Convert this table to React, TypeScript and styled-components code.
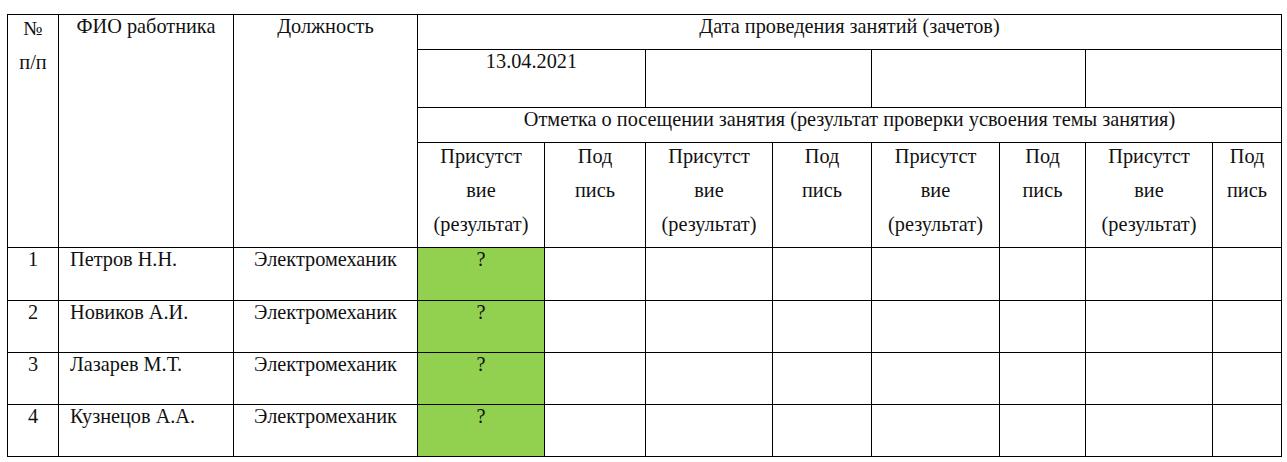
import React from "react";
import styled, { createGlobalStyle } from "styled-components";

const Global = createGlobalStyle`
  html, body { margin: 0; padding: 0; background: #fff; }
  body { font-family: "Liberation Serif", "Times New Roman", Times, serif; color: #000; }
`;

const Page = styled.div`
  padding: 14px 0 0 7px;
`;

const Sheet = styled.div`
  display: grid;
  width: 1275px;
  box-sizing: border-box;
  padding: 1px;
  gap: 1px;
  background: #000;
  grid-template-columns: 50px 174px 183px 126px 100px 126px 98px 127px 85px 126px 68px;
  grid-template-rows: 34px 57px 34px 104px 52px 51px 51px 51px;
  font-family: "Liberation Serif", "Times New Roman", Times, serif;
  font-size: 20.3px;
  line-height: 23px;
  color: #111;
`;

const Cell = styled.div<{ $col?: string; $row?: string; $align?: "left" | "center"; $green?: boolean }>`
  background: ${(p) => (p.$green ? "#92d050" : "#fff")};
  grid-column: ${(p) => p.$col ?? "auto"};
  grid-row: ${(p) => p.$row ?? "auto"};
  text-align: ${(p) => p.$align ?? "center"};
  padding: 0 ${(p) => (p.$align === "left" ? "11px" : "0")};
  white-space: nowrap;
  overflow: hidden;
`;

const Lines = styled.div`
  line-height: 34px;
  margin-top: -4px;
`;

const subHeads = [
  ["Присутст", "вие", "(результат)"],
  ["Под", "пись"],
];

const people = [
  ["1", "Петров Н.Н."],
  ["2", "Новиков А.И."],
  ["3", "Лазарев М.Т."],
  ["4", "Кузнецов А.А."],
];

export default function App() {
  return (
    <>
      <Global />
      <Page>
        <Sheet>
          <Cell $col="1" $row="1 / 5">
            <Lines>
              <div>№</div>
              <div>п/п</div>
            </Lines>
          </Cell>
          <Cell $col="2" $row="1 / 5">ФИО работника</Cell>
          <Cell $col="3" $row="1 / 5">Должность</Cell>
          <Cell $col="4 / 12" $row="1">Дата проведения занятий (зачетов)</Cell>

          <Cell $col="4 / 6" $row="2">13.04.2021</Cell>
          <Cell $col="6 / 8" $row="2" />
          <Cell $col="8 / 10" $row="2" />
          <Cell $col="10 / 12" $row="2" />

          <Cell $col="4 / 12" $row="3">
            Отметка о посещении занятия (результат проверки усвоения темы занятия)
          </Cell>

          {[0, 1, 2, 3].flatMap((i) =>
            subHeads.map((lines, j) => (
              <Cell key={`h${i}-${j}`} $row="4">
                <Lines>
                  {lines.map((l) => (
                    <div key={l}>{l}</div>
                  ))}
                </Lines>
              </Cell>
            ))
          )}

          {people.map(([n, name]) => (
            <React.Fragment key={n}>
              <Cell>{n}</Cell>
              <Cell $align="left">{name}</Cell>
              <Cell>Электромеханик</Cell>
              <Cell $green>?</Cell>
              {Array.from({ length: 7 }).map((_, k) => (
                <Cell key={k} />
              ))}
            </React.Fragment>
          ))}
        </Sheet>
      </Page>
    </>
  );
}
